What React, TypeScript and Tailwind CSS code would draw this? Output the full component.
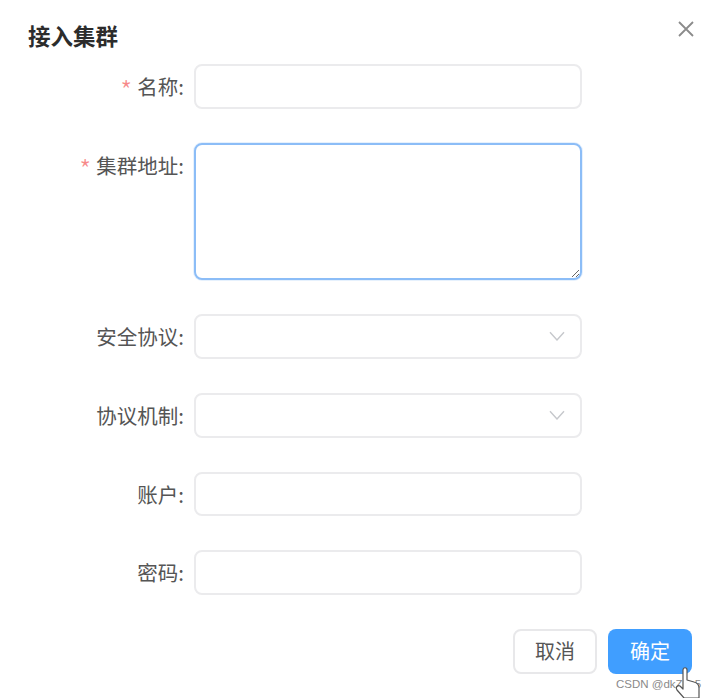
import React from "react";

const font = { fontFamily: '"Noto Sans CJK SC", "Liberation Sans", sans-serif' };

function Label({ text, required }: { text: string; required?: boolean }) {
  return (
    <label className="w-[184px] shrink-0 text-right text-[20.5px] leading-[44px] text-[#555]">
      {required && <span className="mr-[5px] inline-block align-[-6px] text-[27px] font-light leading-none text-[#f78989]">*</span>}
      {text}:
    </label>
  );
}

function Input() {
  return <input className="h-[44.5px] w-[388px] rounded-[8px] border-2 border-[#ebebed] bg-white outline-none" />;
}

function Select({ tall }: { tall?: boolean }) {
  return (
    <div className={tall ? "flex h-[45px] w-[388px] items-center justify-end rounded-[8px] border-2 border-[#ebebed] bg-white pr-[15px]" : "flex h-[44.5px] w-[388px] items-center justify-end rounded-[8px] border-2 border-[#ebebed] bg-white pr-[15px]"}>
      <svg width="16" height="10" viewBox="0 0 16 10" fill="none" stroke="#c6c8cc" strokeWidth="1.4">
        <path d="M1 1.2 L8 9 L15 1.2" />
      </svg>
    </div>
  );
}

export default function App() {
  return (
    <div style={font} className="relative h-[698px] w-[713px] overflow-hidden bg-white">
      <div className="flex items-start justify-between pl-[28px] pr-[18px] pt-[18px]">
        <h1 className="text-[22.5px] font-bold leading-[34px] text-[#2c2c2c]">接入集群</h1>
        <svg className="mt-[2px]" width="18" height="18" viewBox="0 0 18 18" fill="none" stroke="#8b8b8b" strokeWidth="1.8">
          <path d="M2 2 L16 16 M16 2 L2 16" />
        </svg>
      </div>

      <div className="mt-[12px] flex flex-col gap-[34px]">
        <div className="flex gap-[10px]">
          <Label text="名称" required />
          <Input />
        </div>
        <div className="flex gap-[10px]">
          <Label text="集群地址" required />
          <textarea className="block h-[137.5px] w-[388px] rounded-[8px] border-2 border-[#8cbdf7] bg-white shadow-[0_0_0_1px_#e6f1fd] outline-none" />
        </div>
        <div className="flex gap-[10px]">
          <Label text="安全协议" />
          <Select />
        </div>
        <div className="flex gap-[10px]">
          <Label text="协议机制" />
          <Select tall />
        </div>
        <div className="flex gap-[10px]">
          <Label text="账户" />
          <Input />
        </div>
        <div className="flex gap-[10px]">
          <Label text="密码" />
          <Input />
        </div>
      </div>

      <div className="mt-[34px] flex justify-end gap-[11px] pr-[21px]">
        <button className="h-[45px] w-[84px] rounded-[8px] border-2 border-[#e8e8ea] bg-white text-[20px] text-[#555]">取消</button>
        <button className="h-[45px] w-[84px] rounded-[8px] bg-[#409eff] text-[20px] text-white">确定</button>
      </div>

      <span className="absolute left-[616px] top-[677px] text-[11.5px] leading-[15px] text-[#8a8a8a]" style={{ fontFamily: '"Liberation Sans", sans-serif' }}>
        CSDN @dkZ8c5
      </span>

      <svg className="absolute left-[674px] top-[666px]" width="28" height="32" viewBox="0 0 28 32" fill="#fff" stroke="#555" strokeWidth="1.2" strokeLinejoin="round">
        <path d="M9 17 V4 C9 1 13 1 13 4 V14 L20 16 C24 17 25 19 25 22 V32 H10 L3 24 C1 21 4 19 6 20 L9 23 Z" />
      </svg>
    </div>
  );
}
